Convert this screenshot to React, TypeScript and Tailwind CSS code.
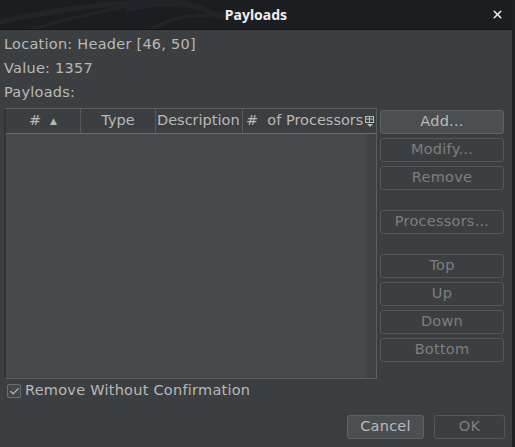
import { Check, X } from "lucide-react"

const font = { fontFamily: '"DejaVu Sans", "Liberation Sans", sans-serif' }

function SideButton({ label, primary }: { label: string; primary?: boolean }) {
  return (
    <div
      className={
        "h-[24px] w-[124px] flex items-center justify-center rounded-[3px] border " +
        (primary
          ? "bg-[#4b4f52] border-[#5e6264] text-[#bbbbbb]"
          : "bg-[#3c3f41] border-[#54575a] text-[#7c7e80]")
      }
    >
      {label}
    </div>
  )
}

export default function App() {
  return (
    <div className="w-[515px] h-[447px] flex bg-[#1e1f22] overflow-hidden" style={font}>
      <div className="w-[512px] h-full flex flex-col">
        {/* Title bar */}
        <div className="relative h-[30px] bg-[#1c1d21] border-b border-[#121315] flex items-center justify-center shrink-0 overflow-hidden">
          <svg className="absolute left-0 top-0" width="300" height="30" viewBox="0 0 300 30" fill="none">
            <path d="M0 22 C60 8 120 2 180 0" stroke="#232429" strokeWidth="5" />
            <path d="M30 30 C80 14 120 8 150 2" stroke="#232429" strokeWidth="3" />
            <path d="M125 10 C160 0 190 2 205 10 C215 16 225 18 240 14" stroke="#222328" strokeWidth="6" />
            <path d="M150 30 C170 18 190 14 210 16" stroke="#232429" strokeWidth="3" />
          </svg>
          <span className="relative text-[14px] font-bold text-[#eeeeee]" style={{ fontFamily: '"Noto Sans", sans-serif' }}>
            Payloads
          </span>
          <X className="absolute right-[8px] top-[8px] text-[#e8e8e8]" size={13} strokeWidth={3} />
        </div>

        {/* Body */}
        <div className="flex-1 bg-[#3c3f41] flex flex-col pl-[4px] pt-[3px] text-[14.5px] tracking-[0.25px] text-[#b8b8b8]">
          <div className="h-[24px] flex items-center">Location: Header [46, 50]</div>
          <div className="h-[24px] flex items-center">Value: 1357</div>
          <div className="h-[24px] flex items-center">Payloads:</div>

          <div className="flex mt-[3px] gap-[3px]">
            {/* Table */}
            <div className="w-[373px] h-[271px] border border-[#5b5e61] border-l-[2px] border-l-[#313335] flex flex-col bg-[#45494a]">
              <div className="h-[25px] flex items-center bg-[#3c3f41] border-b border-[#6b6e71] shrink-0 tracking-normal">
                <div className="w-[75px] h-full flex items-center justify-center gap-[9px] border-r border-[#56595b]">
                  <span>#</span>
                  <span className="text-[9px] leading-none">▲</span>
                </div>
                <div className="w-[75px] h-full flex items-center justify-center border-r border-[#56595b]">Type</div>
                <div className="w-[87px] h-full flex items-center pl-[1px] border-r border-[#56595b] whitespace-nowrap overflow-hidden">Description</div>
                <div className="w-[120px] h-full flex items-center pl-[3px] whitespace-nowrap overflow-hidden">#&nbsp; of Processors</div>
                <div className="flex-1 h-full flex items-center justify-center">
                  <svg width="10" height="11" viewBox="0 0 10 11" fill="none">
                    <rect x="0.5" y="0.5" width="8" height="6" stroke="#bbbbbb" />
                    <line x1="0.5" y1="3" x2="8.5" y2="3" stroke="#bbbbbb" />
                    <line x1="4.5" y1="0.5" x2="4.5" y2="6.5" stroke="#bbbbbb" />
                    <path d="M2 8 L8 8 L5 11 Z" fill="#bbbbbb" />
                  </svg>
                </div>
              </div>
              <div className="flex-1 flex">
                <div className="flex-1" />
                <div className="w-[10px] bg-[#3f4345]" />
              </div>
            </div>

            {/* Buttons */}
            <div className="flex flex-col gap-[4px] pt-[2px]">
              <SideButton label="Add..." primary />
              <SideButton label="Modify..." />
              <SideButton label="Remove" />
              <div className="h-[12px]" />
              <SideButton label="Processors..." />
              <div className="h-[12px]" />
              <SideButton label="Top" />
              <SideButton label="Up" />
              <SideButton label="Down" />
              <SideButton label="Bottom" />
            </div>
          </div>

          <div className="flex items-center gap-[4px] mt-[2px] pl-[3px] h-[20px]">
            <div className="w-[14px] h-[14px] rounded-[2px] border border-[#6b6e71] bg-[#43474a] flex items-center justify-center">
              <Check size={11} strokeWidth={2.5} className="text-[#bbbbbb]" />
            </div>
            <span>Remove Without Confirmation</span>
          </div>

          <div className="flex justify-end gap-[10px] mt-[14px] pr-[7px]">
            <div className="h-[24px] w-[77px] flex items-center justify-center rounded-[3px] border border-[#5e6264] bg-[#4b4f52] text-[#bbbbbb]">
              Cancel
            </div>
            <div className="h-[24px] w-[71px] flex items-center justify-center rounded-[3px] border border-[#54575a] text-[#7c7e80]">
              OK
            </div>
          </div>
        </div>
      </div>
      <div className="w-[3px] h-full bg-[#1e1f22]" />
    </div>
  )
}
